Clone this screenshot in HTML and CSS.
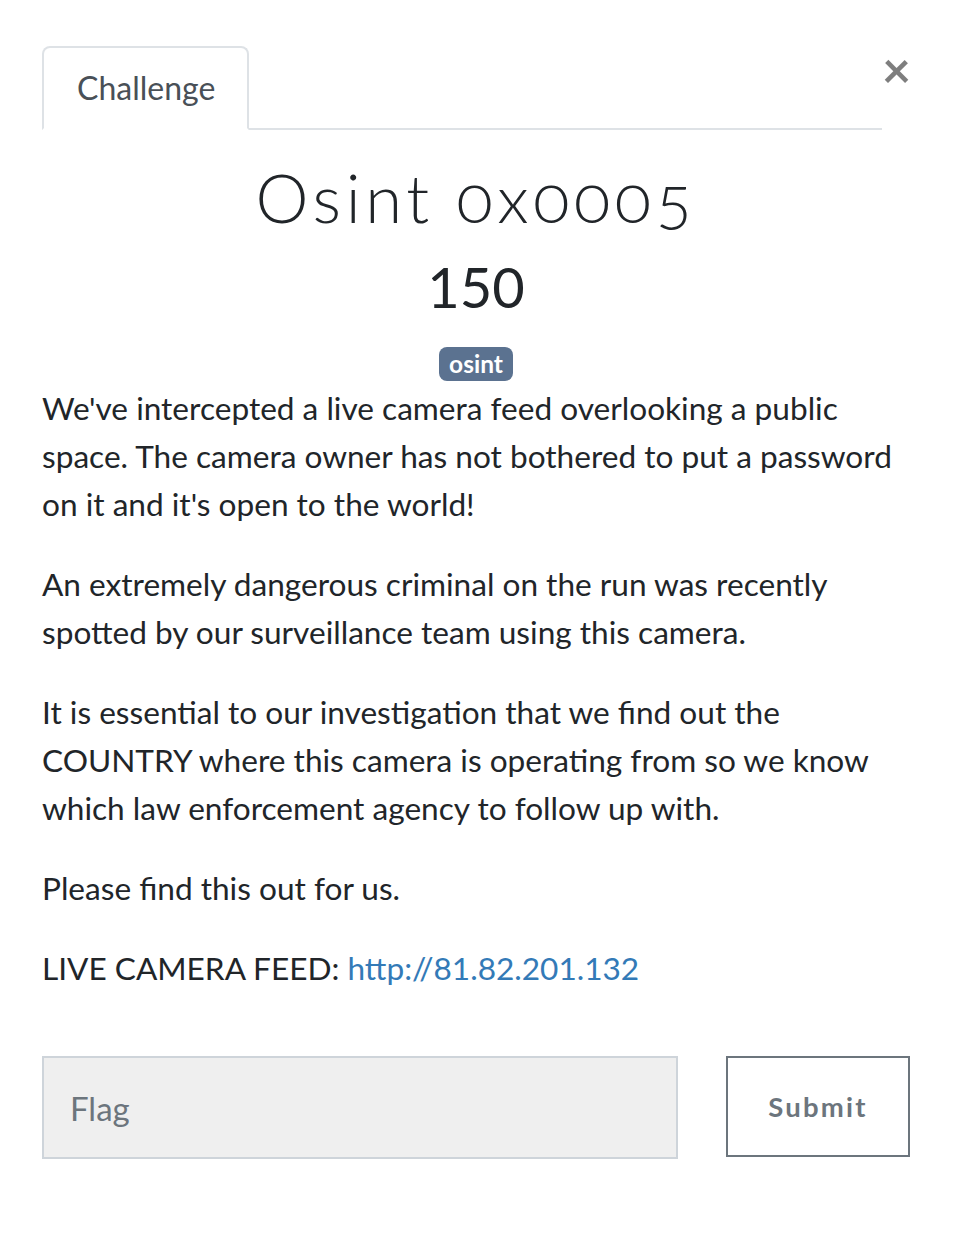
FILE: index.html
```html
<!DOCTYPE html>
<html lang="en">
<head>
<meta charset="utf-8">
<title>Challenge</title>
<link rel="stylesheet" href="styles.css">
</head>
<body>
<div class="modal">
  <div class="header">
    <ul class="tabs">
      <li class="tab">Challenge</li>
    </ul>
    <button class="close" type="button" aria-label="Close">&times;</button>
  </div>
  <div class="body">
    <h2 class="name">Osint 0x0005</h2>
    <h3 class="value">150</h3>
    <div class="tags"><span class="badge">osint</span></div>
    <div class="desc">
      <p>We've intercepted a live camera feed overlooking a public space. The camera owner has not bothered to put a password on it and it's open to the world!</p>
      <p>An extremely dangerous criminal on the run was recently spotted by our surveillance team using this camera.</p>
      <p>It is essential to our investigation that we find out the COUNTRY where this camera is operating from so we know which law enforcement agency to follow up with.</p>
      <p>Please find this out for us.</p>
      <p>LIVE CAMERA FEED: <a href="#">http://81.82.201.132</a></p>
    </div>
    <form class="submit-row">
      <input class="flag" type="text" placeholder="Flag">
      <button class="submit" type="button">Submit</button>
    </form>
  </div>
</div>
</body>
</html>
```
FILE: styles.css
```css
* { box-sizing: border-box; }
html, body { margin: 0; padding: 0; background: #fff; }
body {
  font-family: Lato, "Open Sans", sans-serif;
  font-size: 31.6px;
  line-height: 48px;
  color: #212529;
}
.modal {
  padding: 46px 46px 0 42px;
}
.header {
  display: flex;
  align-items: flex-start;
}
.tabs {
  list-style: none;
  margin: 0;
  padding: 0;
  flex: 1;
  display: flex;
  border-bottom: 2px solid #dee2e6;
}
.tab {
  margin-bottom: -2px;
  padding: 16px 32px 16px 33px;
  border: 2px solid #dee2e6;
  border-bottom-color: #fff;
  border-radius: 8px 8px 0 0;
  color: #495057;
  background: #fff;
  font-size: 32px;
}
.close {
  flex: 0 0 28px;
  width: 28px;
  border: 0;
  background: none;
  padding: 0;
  margin: -2px 0 0 0;
  text-align: center;
  font-family: Lato, sans-serif;
  font-size: 50px;
  font-weight: 700;
  line-height: 1;
  color: #000;
  opacity: .5;
}
.name {
  margin: 27px 0 16px;
  text-align: center;
  font-family: Lato, sans-serif;
  font-weight: 300;
  font-size: 67px;
  letter-spacing: 4.6px;
  line-height: 80px;
  font-variant-numeric: oldstyle-nums;
}
.value {
  margin: 0 0 27px;
  text-align: center;
  font-weight: 400;
  font-size: 56px;
  line-height: 67px;
}
.tags {
  display: flex;
  justify-content: center;
  margin-bottom: 3px;
}
.badge {
  display: block;
  background: #5b7290;
  color: #fff;
  font-weight: 700;
  font-size: 24.5px;
  line-height: 24px;
  padding: 5px 10px;
  border-radius: 8px;
}
.desc p {
  margin: 0 0 32px;
}
.desc a {
  color: #337ab7;
  text-decoration: none;
}
.submit-row {
  display: flex;
  gap: 48px;
  margin-top: 64px;
}
.flag {
  flex: 0 0 636px;
  height: 103px;
  background: #efefef;
  border: 2px solid #ced4da;
  padding: 0 26px;
  font-family: Lato, sans-serif;
  font-size: 33px;
  color: #495057;
}
.flag::placeholder { color: #6c757d; }
.submit {
  flex: 0 0 184px;
  height: 101px;
  background: #fff;
  border: 2px solid #6c757d;
  font-family: Lato, sans-serif;
  font-weight: 700;
  font-size: 27.5px;
  letter-spacing: 2.2px;
  color: #6c757d;
}
```
